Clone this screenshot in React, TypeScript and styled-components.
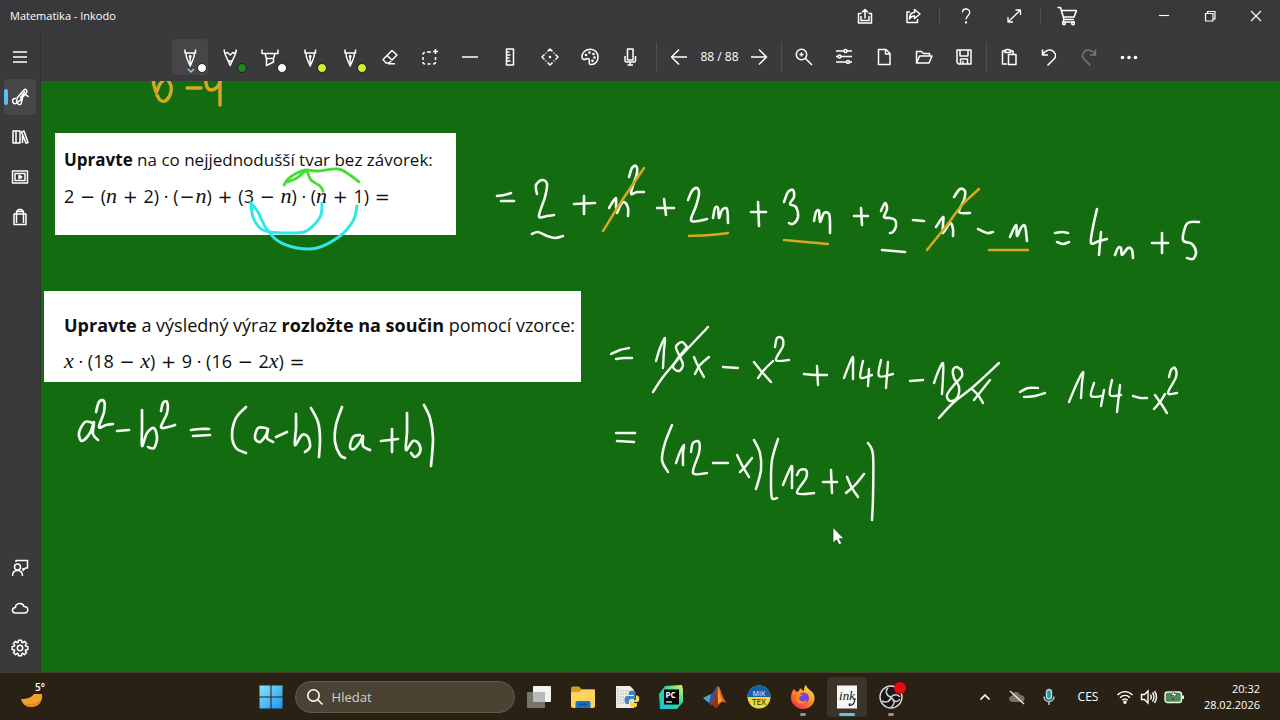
import React from "react";
import styled, { createGlobalStyle } from "styled-components";

const GlobalStyle = createGlobalStyle`
  * { box-sizing: border-box; }
  body {
    margin: 0;
    background: #146c10;
    color: #ffffff;
    font-family: "Open Sans", "Noto Sans", sans-serif;
  }
  button {
    margin: 0;
    padding: 0;
    border: 0;
    background: none;
    color: inherit;
    font: inherit;
  }
`;

/* ---------- icons, drawn on a 20 x 20 grid ---------- */

/* Outline of the settings cog: eight teeth round a ring. */
const cog = () => {
  const corners: string[] = [];
  for (let tooth = 0; tooth < 8; tooth++) {
    [[6, -17], [8, -11], [8, 11], [6, 17]].forEach(([r, offset]) => {
      const angle = ((tooth * 45 + offset) * Math.PI) / 180;
      corners.push(`${(10 + r * Math.cos(angle)).toFixed(2)} ${(10 + r * Math.sin(angle)).toFixed(2)}`);
    });
  }
  return `M${corners.join("L")}Z`;
};

const icons = {
  menu: <path d="M3 5h14M3 10h14M3 15h14" />,
  pen: (
    <>
      <path d="M5 2.500v3.500h10.500V2.500M6 6.500c0 4 1.200 6 2.200 8l2 4.500 2-4.500c1-2 2.200-4 2.200-8" />
      <path d="M10.200 10v7" />
      <circle cx="10.200" cy="9.500" r="0.700" />
    </>
  ),
  pencil: <path d="M4 2.500l1 4.500 5.200 11.500 5.200-11.500 1-4.500M5 6.500l2.500-1 2.700 2.500 2.700-2.500 2.500 1M8 13.500l2.200 1 2.200-1" />,
  marker: <path d="M2 2.500v4h16v-4M5 6.500l1.500 5v7l7-3.500v-3.500l1.500-5M6.500 11.500h7" />,
  eraser: <path d="M12 3.500l5 4.500-8 8H6l-3-3.500zM7 8.500l5.500 5M8 16.800h7" />,
  select: (
    <>
      <path d="M5 5.500Q3 5.500 3 7.500M3 10v3M3 15q0 2 2 2M7.500 17h3M13 17q2.500 0 2.500-2M15.500 10v3M7 5h4" />
      <path d="M15.500 2v5M13 4.500h5" />
    </>
  ),
  line: <path d="M2 10h16" />,
  ruler: <path d="M6.500 2h7v16h-7zM6.500 5h3M6.500 8h4M6.500 11h3M6.500 14h4" />,
  move: (
    <>
      <path d="M7.500 4.500L10 2l2.500 2.500M7.500 15.500L10 18l2.500-2.500M4.500 7.500L2 10l2.500 2.500M15.500 7.500L18 10l-2.500 2.500M5.500 6.500l.8-.8M14.500 6.500l-.8-.8M5.500 13.500l.8.8M14.500 13.500l-.8.8" />
      <circle cx="10" cy="10" r="0.600" />
    </>
  ),
  palette: (
    <>
      <path d="M2 10C2 5 6 2.200 10.500 2.200S18 6 18 10s-2.500 7.500-6.500 7.500c-2.500 0-2.500-1.500-2.200-3 .4-2.500-.8-3.500-3-2.500C4 13 2 12.500 2 10z" />
      <circle cx="6" cy="8" r="0.600" />
      <circle cx="9.500" cy="5.500" r="0.600" />
      <circle cx="13.500" cy="7" r="0.600" />
      <circle cx="14.500" cy="10.500" r="0.600" />
      <circle cx="12.500" cy="13.800" r="0.600" />
    </>
  ),
  mic: <path d="M7.500 2h5.500v11H7.500zM5 9v4.500q0 1.500 1.500 1.500h7.500q1.500 0 1.500-1.500V9M10.200 15v3M7.500 18h5.500" />,
  back: <path d="M18 10H2.500M10 2.500L2.500 10l7.500 7.500" />,
  forward: <path d="M2 10h15.500M10 2.500l7.500 7.500-7.500 7.500" />,
  zoom: (
    <>
      <circle cx="7.500" cy="7.500" r="5.200" />
      <path d="M11.500 11.500L18 18M7.500 5.500v4M5.500 7.500h4" />
    </>
  ),
  sliders: (
    <>
      <path d="M2 4h8M13 4h5M2 9.500h2M7 9.500h11M2 15h10M15.500 15H18" />
      <circle cx="11.500" cy="4" r="1.500" />
      <circle cx="5.500" cy="9.500" r="1.500" />
      <circle cx="14" cy="15" r="1.500" />
    </>
  ),
  file: <path d="M4.500 2.500H12l4 4V17.500H4.500zM11.500 2.500V7H16" />,
  folder: <path d="M2.500 16V4.500h5l2 2h6V9M2.500 16L5.500 9H18l-3 7z" />,
  save: <path d="M3 3h14v14H4.500L3 15.500zM6 3v6h8V3M6.500 17v-5h7v5M9 14v3" />,
  paste: <path d="M8 17H3.500V4H6M11.500 4H14v3M6 3h1.500q1.200-1.500 2.500 0h1.500v2.500H6zM9.500 7.500h7.500V17.500H9.500z" />,
  undo: <path d="M3.500 2.500V8H9M3.500 8c3-5.500 8.500-6.500 11.500-3s1 6.500-1 8L8.500 18.500" />,
  redo: <path d="M16.500 2.500V8H11M16.500 8c-3-5.500-8.500-6.500-11.500-3s-1 6.500 1 8l5.500 5.500" />,
  more: (
    <g fill="currentColor" stroke="none">
      <circle cx="3.500" cy="10.500" r="1.800" />
      <circle cx="10" cy="10.500" r="1.800" />
      <circle cx="16.500" cy="10.500" r="1.800" />
    </g>
  ),
  exportBox: <path d="M6.500 7.500H3.500V17h13V7.500h-3M6 10v4.500h8V10M10 12.500V3.500M7 6.500l3-3 3 3" />,
  share: <path d="M7 6H4v10.500h10.500V13M11.500 3.500L17 8l-5.500 4.500V10C9 10 7.500 11 6.500 13 6.500 9.500 8 6.500 11.500 6.500z" />,
  help: (
    <>
      <path d="M6.500 6.500C6.500 4 8 3 10 3s3.700 1.500 3.700 3.500c0 3-3.700 3.500-3.700 7" />
      <circle cx="10" cy="16.500" r="0.500" />
    </>
  ),
  expand: <path d="M4 16L16.500 4M11.500 4h5v5M4 11v5h5" />,
  cart: (
    <>
      <path d="M.500 1.500h3L7 13.500h10M4.500 4.500h15L17 11H6.500M7 13.500l-1 2.500h12" />
      <circle cx="7" cy="17.500" r="1.300" />
      <circle cx="16" cy="17.500" r="1.300" />
    </>
  ),
  minimize: <path d="M5 9.500h10" />,
  restore: <path d="M5.500 7.500h7.500v7.500H5.500zM7.500 7.500V5.500h7.500v7.500h-2" />,
  close: <path d="M5 5l10 10M15 5L5 15" />,
  draw: <path d="M6 11.500C3 11 2 13 2.800 15c1 2.500 3 2 4.500.5M6.500 15.500l.8-5L14 3c1.500-1.500 4 .5 2.500 2.500L9.500 14zM7.500 16c1 2.500 4 2 4-.5l1.500-7c.5-1.500 3-1.500 4 0 .5.800 1 1 1.500.5M10 11l5-6.500" />,
  library: <path d="M3 4h3v12H3zM6 4h4v12H6zM11.500 5l2.500-1 4 11.500-2 .8zM12.500 8.500v7.500" />,
  slides: <path d="M2.500 4h15v12h-15zM5 6.500h10v7H5zM9 8.500v3l2.800-1.500z" />,
  bag: <path d="M4 7h12v10.500H4zM6.500 16V4.500L8.500 2.500h3l2 2V16M6.500 4.500h7" />,
  feedback: (
    <>
      <circle cx="7.500" cy="9" r="3" />
      <path d="M2.500 18c0-3.500 2-5.500 5-5.500s5 2 5 5.500M6 4V2.500h11.500v7.500h-2l-2.500 2.500V10" />
    </>
  ),
  cloud: <path d="M5.500 15C1.500 15 1.500 9.500 5.500 9.500c0-5 7.500-5.500 8.500-1 5 0 5 6.500.5 6.500z" />,
  gear: (
    <>
      <circle cx="10" cy="10" r="2.700" />
      <path d={cog()} />
    </>
  ),
  search: (
    <>
      <circle cx="8.500" cy="8.500" r="5.700" />
      <path d="M12.800 12.800L17.500 17.500" />
    </>
  ),
  chevronUp: <path d="M5.500 12.500L10 8l4.500 4.500" />,
};

type IconName = keyof typeof icons;

const Glyph = styled.svg<{ $weight: number }>`
  display: block;
  width: 20px;
  height: 20px;
  fill: none;
  stroke: currentColor;
  stroke-width: ${(p) => p.$weight}px;
  stroke-linejoin: round;
`;

const Icon = ({ name, weight = 1.5 }: { name: IconName; weight?: number }) => (
  <Glyph viewBox="0 0 20 20" $weight={weight} aria-hidden="true">
    {icons[name]}
  </Glyph>
);

/* ---------- window frame ---------- */

const Screen = styled.div`
  display: flex;
  flex-direction: column;
  min-height: 100vh;
`;

const TitleBar = styled.header`
  display: flex;
  align-items: center;
  height: 32px;
  padding: 0 1px 0 10px;
  background: #39393b;
`;

const Title = styled.h1`
  flex: 1;
  margin: 0;
  font-size: 11px;
  font-weight: 400;
  line-height: 16px;
`;

const TitleActions = styled.div`
  display: flex;
  align-items: center;
  margin-right: 50px;
`;

const TitleButton = styled.button<{ $width: number }>`
  display: grid;
  place-items: center;
  width: ${(p) => p.$width}px;
  height: 32px;
`;

const Rule = styled.span<{ $height: number; $space: number }>`
  width: 1px;
  height: ${(p) => p.$height}px;
  margin: 0 ${(p) => p.$space}px;
  background: #505052;
`;

const Workspace = styled.div`
  display: flex;
  flex: 1;
`;

const Sidebar = styled.nav`
  display: flex;
  flex-direction: column;
  gap: 4px;
  width: 41px;
  padding: 7px 4px 6px;
  border-right: 1px solid #2f3330;
  background: #3a393c;
`;

const SideButton = styled.button<{ $active?: boolean }>`
  position: relative;
  display: grid;
  place-items: center;
  width: 32px;
  height: 36px;
  border-radius: 4px;
  background: ${(p) => (p.$active ? "#474649" : "transparent")};

  &::before {
    content: "";
    display: ${(p) => (p.$active ? "block" : "none")};
    position: absolute;
    left: 0;
    top: 10px;
    width: 4px;
    height: 16px;
    border-radius: 2px;
    background: #5cc0ee;
  }
`;

const Grow = styled.div<{ $share: number }>`
  flex: ${(p) => p.$share};
`;

const Main = styled.main`
  display: flex;
  flex: 1;
  flex-direction: column;
  min-width: 0;
`;

const Toolbar = styled.div`
  display: flex;
  align-items: center;
  justify-content: center;
  gap: 4px;
  height: 49px;
  padding-right: 3px;
  background: #3a3a3c;
`;

const ToolGroup = styled.div`
  display: flex;
  gap: 4px;
  padding-right: 4px;
`;

const ToolButton = styled.button<{ $active?: boolean }>`
  position: relative;
  display: grid;
  place-items: center;
  width: 36px;
  height: 36px;
  border-radius: 4px;
  background: ${(p) => (p.$active ? "#464648" : "transparent")};

  &:disabled {
    color: #77777a;
  }
`;

const InkDot = styled.span<{ $color: string }>`
  position: absolute;
  right: 1px;
  bottom: 2px;
  width: 10px;
  height: 10px;
  border: 1px solid #1d1d1d;
  border-radius: 50%;
  background: ${(p) => p.$color};
`;

const OpenMark = styled.svg`
  position: absolute;
  left: 15px;
  bottom: 2px;
  width: 8px;
  height: 5px;
  fill: none;
  stroke: #7fe0dc;
  stroke-width: 1.300px;
`;

const PageCount = styled.span`
  width: 36px;
  font-size: 12px;
  line-height: 16px;
  text-align: center;
  white-space: nowrap;
`;

/* ---------- board ---------- */

const Board = styled.section`
  position: relative;
  flex: 1;
  overflow: hidden;
  background: #146c10;
`;

const Note = styled.article<{ $x: number; $y: number; $w: number; $pad: string }>`
  position: absolute;
  left: ${(p) => p.$x}px;
  top: ${(p) => p.$y}px;
  width: ${(p) => p.$w}px;
  padding: ${(p) => p.$pad};
  background: #ffffff;
  color: #101010;
  white-space: nowrap;
`;

const NoteLine = styled.p<{ $size: number }>`
  margin: 0;
  font-size: ${(p) => p.$size}px;
  line-height: 36px;
`;

const Formula = styled.p`
  height: 36px;
  margin: 0;
  font-size: 18px;
  line-height: 36px;

  i {
    font-family: "Liberation Serif", serif;
    font-size: 22px;
    line-height: 20px;
  }
`;

const Op = styled.span`
  padding: 0 1px;
  font-family: "DejaVu Sans", sans-serif;
  font-size: 18px;
  line-height: 20px;
`;

const InkLayer = styled.svg`
  position: absolute;
  left: 0;
  top: 0;
  width: 1239px;
  height: 592px;
  fill: none;
  stroke-linecap: round;
  stroke-linejoin: round;
`;

const Pointer = styled.svg`
  position: absolute;
  left: 791px;
  top: 445px;
  width: 14px;
  height: 20px;
`;

type Point = [number, number];

/* Smooth curve through every sampled pen position. */
const curve = (stroke: string) => {
  const p = stroke.split(" ").map((s) => s.split(",").map(Number) as Point);
  let d = `M${p[0][0]} ${p[0][1]}`;
  for (let i = 0; i < p.length - 1; i++) {
    const a = p[i - 1] || p[i];
    const b = p[i];
    const c = p[i + 1];
    const e = p[i + 2] || c;
    d += `C${b[0] + (c[0] - a[0]) / 6} ${b[1] + (c[1] - a[1]) / 6} ${c[0] - (e[0] - b[0]) / 6} ${
      c[1] - (e[1] - b[1]) / 6
    } ${c[0]} ${c[1]}`;
  }
  return d;
};

type InkSet = { label: string; color: string; width: number; strokes: string[] };

const ink: InkSet[] = [
  {
    label: "2 + n² + 2n + 3n + 3 − n² − n = 4n + 5",
    color: "#f4fbf2",
    width: 2.6,
    strokes: [
      "497,196 504,195 511,193",
      "501,201 514,201",
      "537,194 536,185 542,180 547,184 545,197 539,216 547,216 554,215",
      "532,234 538,232 547,236 555,238 563,236",
      "574,204 595,203",
      "584,196 584,214",
      "609,208 612,203 616,198 616,206 617,213 620,206 624,202 628,208 628,216",
      "629,177 632,168 636,166 637,173 631,193 637,192 644,192",
      "657,208 674,208",
      "664,199 666,215",
      "688,200 692,191 697,188 699,194 696,206 691,220 698,221 707,219",
      "713,218 715,208 718,208 719,218 722,210 727,209 728,223",
      "751,212 766,212",
      "758,202 759,226",
      "784,202 788,192 793,190 794,197 790,204 796,207 798,217 793,224 789,223",
      "814,221 816,212 819,211 820,222 824,213 829,214 830,223 830,233",
      "854,216 868,216",
      "861,208 862,225",
      "881,211 885,203 887,209 884,217 890,218 895,220 896,226 893,232 890,233",
      "882,250 905,252",
      "913,220 924,221",
      "936,227 943,217 943,225 943,233 950,223 953,229 953,236",
      "954,197 960,189 965,191 964,200 959,212 970,213",
      "978,229 987,233 993,232",
      "1010,237 1016,225 1017,236 1021,228 1025,226 1027,241",
      "1055,233 1062,232 1068,233",
      "1057,242 1063,244 1069,242",
      "1097,209 1093,227 1091,243 1099,241 1107,239",
      "1101,232 1099,255",
      "1115,255 1118,248 1121,248 1122,255 1128,248 1132,250 1133,258",
      "1152,243 1168,243",
      "1162,233 1162,253",
      "1199,222 1191,222 1186,225 1183,240 1192,244 1196,252 1193,259 1187,258",
    ],
  },
  {
    label: "18x − x² + 144 − 18x = 144 − x²",
    color: "#f4fbf2",
    width: 2.4,
    strokes: [
      "611,354 620,350 629,348",
      "616,359 624,358 632,358",
      "656,361 660,348 665,338 664,350 663,368",
      "687,347 682,342 676,347 680,357 683,365 679,371 673,367 678,358 687,347",
      "708,327 680,357 663,377 653,392",
      "694,357 698,366 704,377",
      "709,357 700,365 695,374",
      "723,367 738,368",
      "754,362 762,372 771,382",
      "773,361 764,370 758,378",
      "775,347 777,338 782,338 783,346 776,360 789,360",
      "804,374 815,375 827,375",
      "817,366 818,385",
      "844,378 849,365 853,357 853,367 853,379",
      "863,361 861,370 861,378 872,375",
      "869,369 868,386",
      "881,360 879,376 893,374",
      "888,362 886,388",
      "910,381 923,380",
      "934,383 938,372 943,363 943,377 942,394",
      "962,371 957,367 953,370 954,378 959,387 957,398 950,401 947,395 954,385 962,376 961,369",
      "999,363 973,387 953,403 939,418",
      "972,389 978,395 983,403",
      "990,380 982,390 974,400",
      "1020,392 1028,388 1038,388",
      "1024,397 1035,396 1045,393",
      "1069,402 1077,383 1083,372 1082,383 1081,398",
      "1094,383 1091,396 1102,396",
      "1104,390 1101,406",
      "1112,380 1110,395 1121,395",
      "1120,385 1117,412",
      "1133,396 1140,398 1147,398",
      "1155,395 1162,405 1167,413",
      "1165,394 1160,402 1154,409",
      "1169,377 1171,370 1175,368 1176,377 1168,393 1177,393",
    ],
  },
  {
    label: "= (12 − x)(12 + x)",
    color: "#f4fbf2",
    width: 2.5,
    strokes: [
      "616,433 635,433",
      "617,441 634,442",
      "672,425 665,443 662,460 668,472",
      "676,463 680,452 684,445 683,453 683,465",
      "691,452 693,443 699,442 699,453 693,473 707,473",
      "713,463 728,463",
      "737,455 743,467 749,477",
      "752,458 745,467 740,472",
      "754,440 760,453 761,470 756,489",
      "778,439 772,460 771,483 772,498 777,498",
      "783,485 788,473 792,466 792,477 792,488",
      "797,475 800,470 806,470 806,478 797,493 814,493",
      "823,482 837,482",
      "831,470 832,493",
      "847,477 852,488 858,497",
      "864,474 855,485 846,493",
      "868,443 873,455 873,497 872,520",
    ],
  },
  {
    label: "a² − b² = (a − b)(a + b)",
    color: "#f4fbf2",
    width: 2.7,
    strokes: [
      "93,423 85,422 79,433 82,441 90,433 94,422 93,434 98,440",
      "96,412 99,402 104,401 104,412 99,427 106,425 113,424",
      "117,431 129,430",
      "142,410 142,428 142,446 147,433 154,428 157,438 154,448 148,447",
      "161,411 163,403 167,402 167,413 161,427 168,427 175,425",
      "191,430 200,429 209,429",
      "193,436 210,435",
      "246,407 236,418 232,435 236,448 246,453",
      "266,428 258,428 255,438 260,442 266,435 268,429 267,438 273,442",
      "276,437 287,432",
      "296,414 296,428 295,445 302,435 308,437 310,447 305,452",
      "311,408 318,422 320,438 319,457",
      "342,407 336,425 335,442 340,455 345,458",
      "360,435 353,437 350,447 354,449 360,442 363,436 363,446 370,450",
      "381,441 398,439",
      "392,429 392,452",
      "407,413 407,432 406,450 413,441 419,444 420,452 415,457 411,453",
      "424,405 430,418 433,438 431,466",
    ],
  },
  {
    label: "Highlighted terms",
    color: "#d8a722",
    width: 2.5,
    strokes: [
      "644,168 623,199 603,231",
      "689,236 710,235 728,233",
      "784,240 828,244",
      "979,189 962,205 947,225 927,250",
      "989,250 1028,250",
    ],
  },
  {
    label: "b − 4",
    color: "#d8a722",
    width: 3.4,
    strokes: [
      "153,78 154,85 156,92",
      "157,91 160,84 166,79 171,86 170,95 165,101 160,100 157,95",
      "187,88 201,88",
      "205,76 207,87 212,90 218,86 221,78",
      "220,76 220,90 220,105",
    ],
  },
  {
    label: "Multiply by n",
    color: "#3fe02c",
    width: 2.8,
    strokes: [
      "284,185 288,179 297,173 306,170 317,171 338,169 350,175 359,182",
      "287,182 297,178 306,171 311,180 320,186 323,191",
    ],
  },
  {
    label: "Multiply by 3",
    color: "#2fe8e6",
    width: 3,
    strokes: [
      "251,203 253,217 260,228 270,232 287,233 304,232 313,226 321,215 322,203",
      "251,203 258,212 266,228 278,241 297,248 317,248 340,236 353,221 357,206",
    ],
  },
];

/* ---------- taskbar ---------- */

const Taskbar = styled.footer`
  display: flex;
  align-items: center;
  height: 48px;
  padding: 0 20px;
  border-top: 1px solid #45422f;
  background: #2a2115;
`;

const Weather = styled.button`
  width: 26px;
  height: 40px;
`;

const Apps = styled.div`
  display: flex;
  align-items: center;
  gap: 4px;
`;

const AppButton = styled.button<{ $active?: boolean }>`
  position: relative;
  display: grid;
  place-items: center;
  width: 40px;
  height: 40px;
  border-radius: 4px;
  background: ${(p) => (p.$active ? "#3c3428" : "transparent")};
`;

const Running = styled.span<{ $active?: boolean }>`
  position: absolute;
  left: ${(p) => (p.$active ? 12 : 17)}px;
  bottom: 1px;
  width: ${(p) => (p.$active ? 16 : 6)}px;
  height: 3px;
  border-radius: 2px;
  background: ${(p) => (p.$active ? "#62c1ea" : "#98928a")};
`;

const AppArt = styled.svg`
  display: block;
  width: 24px;
  height: 24px;
  overflow: visible;
`;

const SearchBox = styled.label`
  display: flex;
  align-items: center;
  gap: 7px;
  width: 220px;
  height: 32px;
  padding: 0 9px;
  border: 1px solid #635a49;
  border-radius: 16px;
  background: #4b4233;
`;

const SearchField = styled.input`
  flex: 1;
  min-width: 0;
  padding: 0;
  border: 0;
  outline: 0;
  background: none;
  color: #ffffff;
  font-family: inherit;
  font-size: 13px;
  line-height: 20px;

  &::placeholder {
    color: #d6d0c6;
    opacity: 1;
  }
`;

const Tray = styled.div`
  display: flex;
  align-items: center;
`;

const TrayButton = styled.button<{ $width: number }>`
  display: flex;
  align-items: center;
  justify-content: center;
  gap: 6px;
  width: ${(p) => p.$width}px;
  height: 40px;
  font-size: 12px;
`;

const TrayArt = styled.svg<{ $width: number }>`
  display: block;
  width: ${(p) => p.$width}px;
  height: 18px;
  fill: none;
  stroke: currentColor;
  stroke-width: 1.400px;
`;

const Clock = styled.button`
  width: 71px;
  font-size: 11px;
  line-height: 16px;
  text-align: right;
`;

const pens: { icon: IconName; color: string; label: string; active?: boolean }[] = [
  { icon: "pen", color: "#ffffff", label: "White pen", active: true },
  { icon: "pencil", color: "#1c8a1c", label: "Green pencil" },
  { icon: "marker", color: "#ffffff", label: "White marker" },
  { icon: "pen", color: "#cdf02a", label: "Lime pen" },
  { icon: "pen", color: "#cdf02a", label: "Second lime pen" },
];

const drawTools: [IconName, string][] = [
  ["eraser", "Eraser"],
  ["select", "Select"],
  ["line", "Line"],
  ["ruler", "Ruler"],
  ["move", "Pan"],
  ["palette", "Palette"],
  ["mic", "Record"],
];

const fileTools: [IconName, string][] = [
  ["zoom", "Zoom"],
  ["sliders", "Page settings"],
  ["file", "New"],
  ["folder", "Open"],
  ["save", "Save"],
];

const sideTop: [IconName, string][] = [
  ["menu", "Menu"],
  ["draw", "Draw"],
  ["library", "Library"],
  ["slides", "Slides"],
  ["bag", "Store"],
];

const sideBottom: [IconName, string][] = [
  ["feedback", "Feedback"],
  ["cloud", "Cloud"],
  ["gear", "Settings"],
];

const Tool = ({ icon, label, disabled }: { icon: IconName; label: string; disabled?: boolean }) => (
  <ToolButton aria-label={label} disabled={disabled}>
    <Icon name={icon} />
  </ToolButton>
);

const TaskApps = () => (
  <>
    <AppButton aria-label="Task view">
      <AppArt viewBox="0 0 24 24">
        <rect x="6" y="1" width="18" height="16" rx="1" fill="#f2f2f2" />
        <rect x="0" y="7" width="18" height="16" rx="1" fill="#77736d" />
        <rect x="6" y="7" width="12" height="10" fill="#b9b9b7" />
      </AppArt>
    </AppButton>
    <AppButton aria-label="File Explorer">
      <AppArt viewBox="0 0 24 24">
        <path d="M0 3.500Q0 1.500 2 1.500h6l3 3h11q2 0 2 2V20H0z" fill="#d99a1c" />
        <path d="M0 7h8l3-2.500h13V21q0 2-2 2H2q-2 0-2-2z" fill="#fbd35d" />
        <path d="M4.500 23v-5q0-2 2-2h11q2 0 2 2v5z" fill="#1672c4" />
        <path d="M8 19.500h8" stroke="#0b4d8f" strokeWidth="1.500" />
      </AppArt>
    </AppButton>
    <AppButton aria-label="Python">
      <AppArt viewBox="0 0 24 24">
        <path d="M1 1h14l4 4v18H1z" fill="#ececea" />
        <path d="M3 3v18M5 6h9M5 9h9M5 12h6M5 15h5M5 18h6" stroke="#b4b4b1" strokeDasharray="1.500 1" />
        <path d="M17.500 5.500c-3 0-3.500 1-3.500 2.500v2h5v1h-6.500c-2 0-3 1.500-3 4s1 4 3 4H14v-2.500c0-1.500 1-2.500 2.500-2.500h4V8c0-1.500-1-2.500-3-2.500z" fill="#3f86c0" />
        <path d="M18.500 22.500c3 0 3.500-1 3.500-2.500v-2h-5v-1h6c1.500-.5 2-6-.5-6.500H21v2.500c0 1.500-1 2.500-2.500 2.500h-3.500v4.500c0 1.500 1.500 2.500 3.500 2.500z" fill="#f8d548" />
      </AppArt>
    </AppButton>
    <AppButton aria-label="PyCharm">
      <AppArt viewBox="0 0 24 24">
        <defs>
          <linearGradient id="pycharm" x1="1" y1="0" x2="0" y2="1">
            <stop offset="0" stopColor="#f2f45c" />
            <stop offset="0.400" stopColor="#2fdc95" />
            <stop offset="1" stopColor="#16bde8" />
          </linearGradient>
        </defs>
        <path d="M6 1l17-1 1 5v12l-6 7H1L0 9z" fill="url(#pycharm)" />
        <rect x="5" y="4.500" width="15" height="15" fill="#000000" />
        <text x="6.500" y="12.500" fill="#ffffff" fontFamily="Open Sans, sans-serif" fontSize="8" fontWeight="700">PC</text>
        <path d="M7 17h6" stroke="#ffffff" strokeWidth="1.200" />
      </AppArt>
    </AppButton>
    <AppButton aria-label="MATLAB">
      <AppArt viewBox="0 0 24 24">
        <path d="M0 13l8-4 3 5-5 4z" fill="#4ba3c9" />
        <path d="M8 9c3-1 4-7 7-8l-2 13-5 7-2-3z" fill="#3d4f8c" />
        <path d="M15 1c2 0 4 11 8.500 17-4-2-5-1-7 1-1.500 2-3 4-4.500 4-1-2-2-4-4-4 4-2 5-13 7-18z" fill="#d95c23" />
        <path d="M15 1c-1 8-1 15 1.500 18-1.500 2-3 4-4.500 4-1-2-2-4-4-4 4-2 5-13 7-18z" fill="#9c2f1a" />
        <path d="M15 1c2 4 1 10 5 15-2-1-3 1-5 4z" fill="#f0a13a" />
      </AppArt>
    </AppButton>
    <AppButton aria-label="MiKTeX">
      <AppArt viewBox="0 0 24 24">
        <circle cx="12" cy="12" r="11.500" fill="#f1d730" />
        <path d="M.500 12a11.500 11.500 0 0 1 23 0z" fill="#1360ae" />
        <text x="12" y="10.500" fill="#b9d9f0" fontFamily="Open Sans, sans-serif" fontSize="7" fontWeight="600" textAnchor="middle">MiK</text>
        <text x="12" y="19.500" fill="#3c4a3a" fontFamily="Open Sans, sans-serif" fontSize="8" fontWeight="600" textAnchor="middle">TEX</text>
      </AppArt>
    </AppButton>
    <AppButton aria-label="Firefox">
      <AppArt viewBox="0 0 24 24">
        <defs>
          <linearGradient id="firefox" x1="0.900" y1="0" x2="0.200" y2="1">
            <stop offset="0" stopColor="#fff04a" />
            <stop offset="0.450" stopColor="#ff9624" />
            <stop offset="1" stopColor="#ee2c52" />
          </linearGradient>
        </defs>
        <path d="M3 4c1 1 1.500 1.500 2 3l3-1 1-3c1 1 2 2 4 3 0-3 .5-5 2-6 1 3 3 4 5 6 2 1 4 5 3.500 8C23 20 18 24 12 24S0 19 0 13c0-4 1-7 3-9z" fill="url(#firefox)" />
        <circle cx="12.500" cy="13" r="5.500" fill="#7a45d6" />
        <path d="M6 9c3 0 4 0 6 1-3 1-4 2-4 4 1 3 5 3 8 1-1 5-9 5-11 0z" fill="#ff8a26" />
      </AppArt>
      <Running />
    </AppButton>
    <AppButton aria-label="Inkodo" $active>
      <AppArt viewBox="0 0 24 24">
        <rect x="2" y="0.500" width="20" height="23" fill="#f6f6f4" />
        <text x="12" y="14.500" fill="#111111" fontFamily="Liberation Serif, serif" fontSize="13" fontStyle="italic" textAnchor="middle">ink</text>
        <path d="M20 13c0 4-2 7-5 7.500-1.500 0-1-2 .5-1.500" fill="none" stroke="#111111" strokeWidth="1.100" />
      </AppArt>
      <Running $active />
    </AppButton>
    <AppButton aria-label="OBS Studio">
      <AppArt viewBox="0 0 24 24">
        <circle cx="12" cy="12" r="11" fill="#17171a" stroke="#dcdcdc" strokeWidth="1.400" />
        <path d="M9 3c-3 3-2 8 3 9 3-3 7-3 9 0M21 14c-2 4-7 3-9-2M12 12c-1 5-5 6-9 4M12 22c3-2 4-5 2-8" fill="none" stroke="#d2d2d2" strokeWidth="1.500" />
        <circle cx="21" cy="3" r="6" fill="#e80a0a" />
      </AppArt>
      <Running />
    </AppButton>
  </>
);

export default function App() {
  return (
    <Screen>
      <GlobalStyle />
      <TitleBar>
        <Title>Matematika - Inkodo</Title>
        <TitleActions>
          <TitleButton $width={48} aria-label="Export"><Icon name="exportBox" /></TitleButton>
          <TitleButton $width={48} aria-label="Share"><Icon name="share" /></TitleButton>
          <Rule $height={16} $space={2} />
          <TitleButton $width={48} aria-label="Help"><Icon name="help" weight={1.3} /></TitleButton>
          <TitleButton $width={48} aria-label="Full screen"><Icon name="expand" weight={1.3} /></TitleButton>
          <Rule $height={16} $space={2} />
          <TitleButton $width={48} aria-label="Shop"><Icon name="cart" weight={1.6} /></TitleButton>
        </TitleActions>
        <TitleButton $width={46} aria-label="Minimize"><Icon name="minimize" weight={1.1} /></TitleButton>
        <TitleButton $width={46} aria-label="Restore"><Icon name="restore" weight={1.2} /></TitleButton>
        <TitleButton $width={46} aria-label="Close"><Icon name="close" weight={1.1} /></TitleButton>
      </TitleBar>

      <Workspace>
        <Sidebar>
          {sideTop.map(([icon, label]) => (
            <SideButton key={label} aria-label={label} $active={icon === "draw"}>
              <Icon name={icon} />
            </SideButton>
          ))}
          <Grow $share={1} />
          {sideBottom.map(([icon, label]) => (
            <SideButton key={label} aria-label={label}>
              <Icon name={icon} />
            </SideButton>
          ))}
        </Sidebar>

        <Main>
          <Toolbar>
            <ToolGroup>
              {pens.map((pen) => (
                <ToolButton key={pen.label} aria-label={pen.label} $active={pen.active}>
                  <Icon name={pen.icon} />
                  {pen.active && (
                    <OpenMark viewBox="0 0 8 5" aria-hidden="true">
                      <path d="M1 1l3 3 3-3" />
                    </OpenMark>
                  )}
                  <InkDot $color={pen.color} />
                </ToolButton>
              ))}
              {drawTools.map(([icon, label]) => (
                <Tool key={label} icon={icon} label={label} />
              ))}
            </ToolGroup>
            <Rule $height={30} $space={0} />
            <Tool icon="back" label="Previous page" />
            <PageCount>88 / 88</PageCount>
            <Tool icon="forward" label="Next page" />
            <Rule $height={30} $space={0} />
            {fileTools.map(([icon, label]) => (
              <Tool key={label} icon={icon} label={label} />
            ))}
            <Rule $height={30} $space={0} />
            <Tool icon="paste" label="Paste" />
            <Tool icon="undo" label="Undo" />
            <Tool icon="redo" label="Redo" disabled />
            <Tool icon="more" label="More" />
          </Toolbar>

          <Board>
            <Note $x={14} $y={52} $w={401} $pad="9px 9px 21px">
              <NoteLine $size={17}>
                <b>Upravte</b> na co nejjednodušší tvar bez závorek:
              </NoteLine>
              <Formula>
                2 <Op>−</Op> (<i>n</i> <Op>+</Op> 2) · (<Op>−</Op><i>n</i>) <Op>+</Op> (3 <Op>−</Op> <i>n</i>) · (<i>n</i> <Op>+</Op> 1) <Op>=</Op>
              </Formula>
            </Note>
            <Note $x={3} $y={210} $w={537} $pad="16px 20px 3px">
              <NoteLine $size={18}>
                <b>Upravte</b> a výsledný výraz <b>rozložte na součin</b> pomocí vzorce:
              </NoteLine>
              <Formula>
                <i>x</i> · (18 <Op>−</Op> <i>x</i>) <Op>+</Op> 9 · (16 <Op>−</Op> 2<i>x</i>) <Op>=</Op>
              </Formula>
            </Note>
            <InkLayer viewBox="41 81 1239 592">
              {ink.map((set) => (
                <g key={set.label} role="img" aria-label={set.label} stroke={set.color} strokeWidth={set.width}>
                  {set.strokes.map((s) => (
                    <path key={s} d={curve(s)} />
                  ))}
                </g>
              ))}
            </InkLayer>
            <Pointer viewBox="0 0 14 20" aria-hidden="true">
              <path d="M1 1.500v15.500l3.500-3.200 2.500 5 2.800-1.300-2.500-4.800h4.700z" fill="#ffffff" stroke="#1c3a1a" strokeWidth="0.700" />
            </Pointer>
          </Board>
        </Main>
      </Workspace>

      <Taskbar>
        <Weather aria-label="Weather">
          <svg width="26" height="40" viewBox="0 0 26 40">
            <path d="M1 22c6 0 10-1 13-5h8c1 8-4 13-10 13-5 0-10-3-11-8z" fill="#f0a02c" />
            <path d="M3 26c6 2 13 1 18-3-2 5-6 7-10 7-3 0-6-1-8-4z" fill="#e58c24" />
            <text x="15" y="14" fill="#ffffff" fontFamily="Open Sans, sans-serif" fontSize="10" fontWeight="600">5°</text>
          </svg>
        </Weather>
        <Grow $share={7} />
        <Apps>
          <AppButton aria-label="Start">
            <AppArt viewBox="0 0 24 24">
              <defs>
                <linearGradient id="start" gradientUnits="userSpaceOnUse" x1="0" y1="0" x2="24" y2="24">
                  <stop offset="0" stopColor="#8ee6fb" />
                  <stop offset="1" stopColor="#1593f2" />
                </linearGradient>
              </defs>
              <path d="M.500.500h11v11H.500zM12.500.500h11v11h-11zM.500 12.500h11v11H.500zM12.500 12.500h11v11h-11z" fill="url(#start)" />
            </AppArt>
          </AppButton>
          <SearchBox>
            <Icon name="search" weight={1.6} />
            <SearchField type="text" placeholder="Hledat" aria-label="Hledat" />
          </SearchBox>
          <TaskApps />
        </Apps>
        <Grow $share={2} />
        <Tray>
          <TrayButton $width={32} aria-label="Hidden icons"><Icon name="chevronUp" weight={1.7} /></TrayButton>
          <TrayButton $width={32} aria-label="Cloud paused">
            <TrayArt $width={18} viewBox="0 0 18 18">
              <path d="M5 14C0 14 0 8 4 8c0-5 7-5 8-1 6 0 6 7 1 7z" fill="#77716a" stroke="none" />
              <path d="M2 3l14 13" stroke="#e6e2dc" />
            </TrayArt>
          </TrayButton>
          <TrayButton $width={32} aria-label="Microphone">
            <TrayArt $width={18} viewBox="0 0 18 18">
              <rect x="6.500" y="1.500" width="5" height="9.500" rx="2.500" fill="#3f8ea3" stroke="#9fe2f0" />
              <path d="M4 8.500c0 6.500 10 6.500 10 0M9 13.500V17" stroke="#9fe2f0" />
            </TrayArt>
          </TrayButton>
          <TrayButton $width={46}>CES</TrayButton>
          <TrayButton $width={78} aria-label="Network, volume and battery">
            <TrayArt $width={18} viewBox="0 0 18 18">
              <path d="M1.500 7c4.500-4.500 10.500-4.500 15 0M4 9.800c3-3 7-3 10 0M6.300 12.300c1.600-1.600 3.800-1.600 5.400 0" />
              <circle cx="9" cy="14.300" r="1" fill="currentColor" />
            </TrayArt>
            <TrayArt $width={18} viewBox="0 0 18 18">
              <path d="M1.500 6.500h3L8 3v12l-3.500-3.500h-3zM10.500 6.500q1.500 2.500 0 5M12.500 4.500q3 4.500 0 9M14.500 3q4 6 0 12" />
            </TrayArt>
            <TrayArt $width={20} viewBox="0 0 20 18">
              <rect x="1" y="4" width="16.500" height="10.500" rx="2.500" fill="#4f8a55" stroke="#e8f5e8" />
              <path d="M19 7.500v3.500" strokeWidth="1.800" />
              <path d="M10.500 1L7 7.500h3L8.500 12 13 5.500h-3z" fill="#ffffff" stroke="#2a2115" strokeWidth="0.600" />
            </TrayArt>
          </TrayButton>
          <Clock>
            20:32
            <br />
            28.02.2026
          </Clock>
        </Tray>
      </Taskbar>
    </Screen>
  );
}
